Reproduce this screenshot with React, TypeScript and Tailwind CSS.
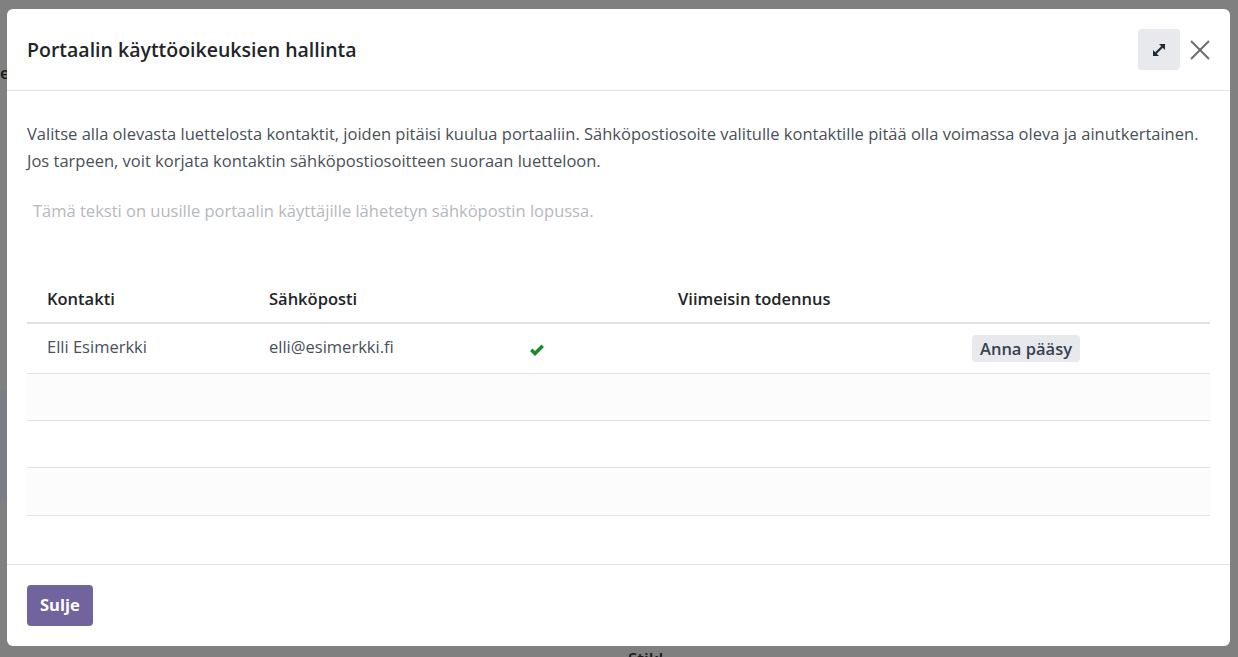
import React from "react";

const font = { fontFamily: "'Open Sans', 'Noto Sans', sans-serif" };

function ExpandIcon() {
  return (
    <svg width="16" height="16" viewBox="0 0 16 16">
      <line x1="4" y1="12" x2="12" y2="4" stroke="#1f2937" strokeWidth="2.2" />
      <polygon points="8,2 14,2 14,8" fill="#1f2937" />
      <polygon points="2,8 2,14 8,14" fill="#1f2937" />
    </svg>
  );
}

function CloseIcon() {
  return (
    <svg width="20" height="20" viewBox="0 0 20 20">
      <line x1="1" y1="1" x2="19" y2="19" stroke="#6c6c6c" strokeWidth="2" />
      <line x1="19" y1="1" x2="1" y2="19" stroke="#6c6c6c" strokeWidth="2" />
    </svg>
  );
}

function Check() {
  return (
    <svg width="16" height="13" viewBox="0 0 16 13">
      <path d="M1 7 L3.5 4.5 L6 7 L12.5 0.5 L15 3 L6 12 Z" fill="#1a8a2e" />
    </svg>
  );
}

const cols = "grid grid-cols-[222px_260px_149px_294px_1fr]";

export default function App() {
  return (
    <div className="relative w-[1238px] h-[657px] overflow-hidden bg-[#808080]" style={font}>
      <div className="absolute left-0 top-[60px] text-[17px] font-semibold text-[#1a1a1a]">er</div>
      <div className="absolute left-0 top-[390px] w-[7px] h-[110px] bg-[#7b7e86]"></div>
      <div className="absolute left-[628px] top-[649px] text-[17px] font-semibold text-[#1a1a1a] leading-[20px]">Stikl</div>
      <div className="relative pt-[9px] pl-[7px]">
        <div className="w-[1223px] h-[637px] bg-white rounded-[6px] flex flex-col">
          <div className="h-[82px] flex items-center pl-[20px] pr-[19px] border-b border-[#dee2e6]">
            <h1 className="flex-1 text-[19.5px] font-semibold text-[#212529]">
              Portaalin käyttöoikeuksien hallinta
            </h1>
            <div className="w-[42px] h-[41px] rounded-[4px] bg-[#e7e9ed] flex items-center justify-center">
              <ExpandIcon />
            </div>
            <div className="ml-[9px] w-[22px] flex items-center justify-center">
              <CloseIcon />
            </div>
          </div>
          <div className="flex-1 pt-[29px] px-[20px] text-[16.5px] text-[#495057]">
            <p className="leading-[27px]">
              Valitse alla olevasta luettelosta kontaktit, joiden pitäisi kuulua portaaliin. Sähköpostiosoite valitulle kontaktille pitää olla voimassa oleva ja ainutkertainen.
              <br />
              Jos tarpeen, voit korjata kontaktin sähköpostiosoitteen suoraan luetteloon.
            </p>
            <p className="mt-[23px] pl-[6px] leading-[27px] text-[#b5b8bd]">
              Tämä teksti on uusille portaalin käyttäjille lähetetyn sähköpostin lopussa.
            </p>
            <div className="mt-[52px]">
              <div className={`${cols} h-[48px] items-center border-b-2 border-[#dee2e6] font-semibold text-[#212529]`}>
                <div className="pl-[20px]">Kontakti</div>
                <div className="pl-[20px]">Sähköposti</div>
                <div></div>
                <div className="pl-[20px]">Viimeisin todennus</div>
                <div></div>
              </div>
              <div className={`${cols} h-[50px] items-center border-b border-[#dee2e6] text-[#495057]`}>
                <div className="pl-[20px] -mt-[3px]">Elli Esimerkki</div>
                <div className="pl-[20px] -mt-[3px]">elli@esimerkki.fi</div>
                <div className="pl-[20px] pt-[3px] flex"><Check /></div>
                <div></div>
                <div className="pl-[20px]">
                  <span className="inline-block rounded-[4px] bg-[#e7e9ed] px-[8px] h-[27px] leading-[27px] font-semibold text-[#374151]">
                    Anna pääsy
                  </span>
                </div>
              </div>
              <div className="h-[47px] border-b border-[#dee2e6] bg-[#fcfcfc]"></div>
              <div className="h-[47px] border-b border-[#dee2e6]"></div>
              <div className="h-[48px] border-b border-[#dee2e6] bg-[#fcfcfc]"></div>
            </div>
          </div>
          <div className="h-[82px] border-t border-[#dee2e6] flex items-center px-[20px]">
            <button className="h-[41px] px-[13px] rounded-[4px] bg-[#71639e] text-white text-[16.5px] font-bold">
              Sulje
            </button>
          </div>
        </div>
      </div>
    </div>
  );
}
